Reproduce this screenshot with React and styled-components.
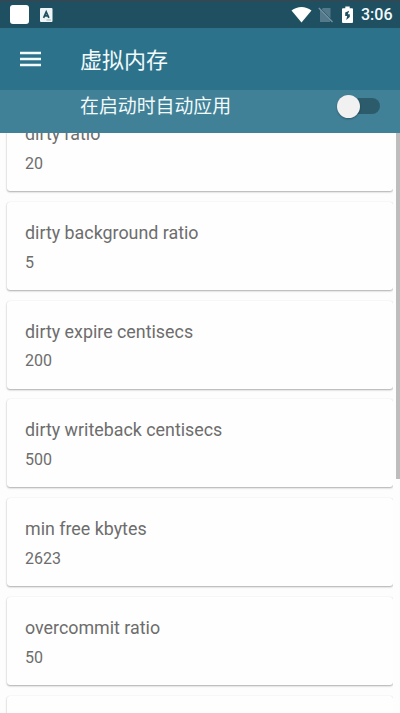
import React from 'react';
import styled, { createGlobalStyle } from 'styled-components';

const GlobalStyle = createGlobalStyle`
  * { box-sizing: border-box; }
  body { margin: 0; overflow: hidden; background: #fdfdfd; }
`;

const Screen = styled.main`
  width: 400px;
  height: 713px;
  display: flex;
  flex-direction: column;
  overflow: hidden;
  background: #fdfdfd;
  font-family: Roboto, 'Noto Sans CJK SC', sans-serif;
`;

const StatusBar = styled.div`
  flex: none;
  height: 28px;
  padding: 1px 8px 1px 10px;
  display: flex;
  align-items: center;
  background: #1f5062;
  border-top: 1px solid #40444a;
  color: #f4fafc;
`;

const AppBadge = styled.span`
  width: 19px;
  height: 19px;
  margin-right: 11px;
  border-radius: 3px;
  background: #fff;
`;

const StatusIcons = styled.div`
  margin-left: auto;
  display: flex;
  align-items: center;
`;

const Icon = styled.svg`
  display: block;
  flex: none;
  margin-right: ${(p) => p.$gap || 0}px;
`;

const Clock = styled.span`
  width: 31px;
  margin-top: 1px;
  font-size: 16px;
  font-weight: 500;
  line-height: 20px;
  white-space: nowrap;
`;

const Toolbar = styled.header`
  flex: none;
  height: 62px;
  padding-left: 20px;
  display: flex;
  align-items: center;
  background: #2d728b;
  color: #f2fafc;
`;

const MenuButton = styled.button`
  width: 60px;
  height: 40px;
  padding: 0;
  border: 0;
  background: none;
  color: inherit;
`;

const Title = styled.h1`
  margin: 3px 0 0;
  font-size: 22px;
  line-height: 30px;
  font-weight: 400;
`;

const BootBar = styled.div`
  flex: none;
  height: 43px;
  padding: 0 20px 11px 80px;
  display: flex;
  align-items: center;
  justify-content: space-between;
  background: #418197;
  color: #f2fafc;
`;

const BootLabel = styled.span`
  margin-top: 2px;
  font-size: 18.9px;
  line-height: 28px;
`;

const Track = styled.span`
  width: 41px;
  height: 16px;
  display: flex;
  align-items: center;
  border-radius: 8px;
  background: #2c5b6b;
`;

const Thumb = styled.span`
  width: 23px;
  height: 23px;
  margin-left: -2px;
  border-radius: 50%;
  background: #f1f1f1;
  box-shadow: 0 1px 2px rgba(0, 0, 0, 0.3);
`;

const Content = styled.div`
  flex: 1;
  min-height: 0;
  display: flex;
  justify-content: space-between;
`;

const List = styled.div`
  width: 393px;
  padding-left: 7px;
  margin-right: 3px;
  overflow: hidden;
`;

const Cards = styled.div`
  width: 386px;
  margin-top: -29.6px;
  display: grid;
  grid-auto-rows: 87.9px;
  row-gap: 10.8px;
`;

const Card = styled.section`
  padding: 20px 18px 0;
  border-radius: 3px;
  background: #fefefe;
  box-shadow: 0 1px 2px rgba(0, 0, 0, 0.32), 0 0 1px rgba(0, 0, 0, 0.1);
  color: #6d6d6d;
`;

const Name = styled.div`
  font-size: 17.85px;
  line-height: 22px;
`;

const Value = styled.div`
  margin-top: 8.7px;
  font-size: 16px;
  line-height: 20px;
`;

const ScrollThumb = styled.div`
  width: 4px;
  height: 346px;
  background: #bdbdbd;
`;

const settings = [
  ['dirty ratio', '20'],
  ['dirty background ratio', '5'],
  ['dirty expire centisecs', '200'],
  ['dirty writeback centisecs', '500'],
  ['min free kbytes', '2623'],
  ['overcommit ratio', '50'],
  ['', ''],
];

export default function App() {
  return (
    <Screen>
      <GlobalStyle />
      <StatusBar>
        <AppBadge />
        <Icon width="13" height="14" viewBox="0 0 13 14">
          <rect width="12.5" height="14" rx="1" fill="#edf5f7" />
          <path d="M3.600 9.800 6.200 3.800l2.700 6M4.600 7.800h3.300" fill="none" stroke="#1f5062" strokeWidth="1.700" />
          <path d="M6.500 12h4.500" stroke="#9db5be" />
        </Icon>
        <StatusIcons>
          <Icon width="21" height="17" viewBox="0 0 21 17" $gap={6}>
            <path d="M.5 4.500C6.500-.2 14.500-.2 20.500 4.500L10.500 16.500Z" fill="#fff" />
          </Icon>
          <Icon width="16" height="17" viewBox="0 0 16 17" $gap={8}>
            <path d="M5 2H12.500V12.300L3.700 3.300ZM2 4 12 14.500V16H2Z" fill="#54798a" />
            <path d="m.8 2 13.700 14" stroke="#7595a1" strokeWidth="1.300" />
          </Icon>
          <Icon width="11" height="17" viewBox="0 0 11 17" $gap={8}>
            <path d="M3.300 .4h4.400v1.800H10q1 0 1 1v12.800q0 1-1 1H1q-1 0-1-1V3.200q0-1 1-1h2.300Z" fill="#fff" />
            <path d="M7.200 4.800 3.200 6.500v3.500h2l-1 4 3.600-3V8.200H5.800Z" fill="#1f5062" />
          </Icon>
          <Clock>3:06</Clock>
        </StatusIcons>
      </StatusBar>
      <Toolbar>
        <MenuButton aria-label="菜单">
          <Icon width="21" height="16" viewBox="0 0 21 16">
            <path d="M0 2h21M0 8h21M0 14h21" stroke="currentColor" strokeWidth="2.300" />
          </Icon>
        </MenuButton>
        <Title>虚拟内存</Title>
      </Toolbar>
      <BootBar>
        <BootLabel>在启动时自动应用</BootLabel>
        <Track>
          <Thumb />
        </Track>
      </BootBar>
      <Content>
        <List>
          <Cards>
            {settings.map(([name, value], i) => (
              <Card key={i}>
                <Name>{name}</Name>
                <Value>{value}</Value>
              </Card>
            ))}
          </Cards>
        </List>
        <ScrollThumb />
      </Content>
    </Screen>
  );
}
